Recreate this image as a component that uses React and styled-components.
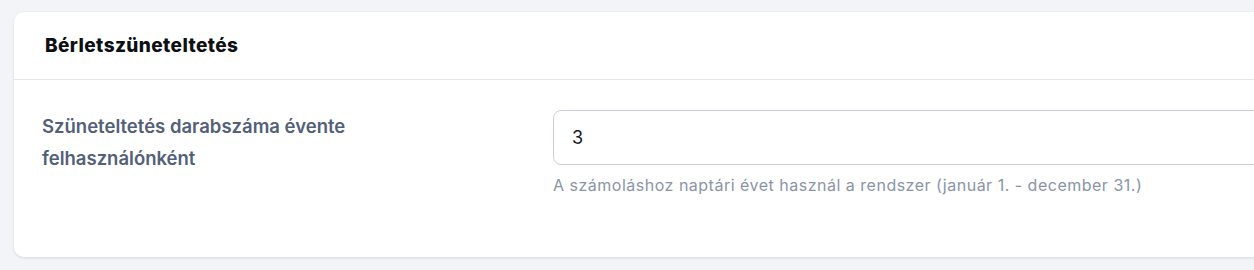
import React from 'react';
import styled, { createGlobalStyle } from 'styled-components';

const GlobalStyle = createGlobalStyle`
  html, body {
    margin: 0;
    padding: 0;
    background: #f3f4f7;
    font-family: Inter, "Noto Sans", sans-serif;
  }
`

const Page = styled.div`
  width: 1254px;
  height: 270px;
  overflow: hidden;
  padding: 12px 0 0 14px;
  box-sizing: border-box;
`

const Card = styled.section`
  width: 1300px;
  background: #ffffff;
  border-radius: 10px;
  box-shadow: 0 1px 3px rgba(20, 30, 50, 0.12);
`

const CardHeader = styled.header`
  height: 67px;
  padding: 0 31px;
  display: flex;
  align-items: center;
  border-bottom: 1px solid #e3e6ec;
`

const Title = styled.h2`
  margin: 0;
  font-size: 19px;
  letter-spacing: 0.4px;
  font-weight: 800;
  color: #0d0f14;
`

const CardBody = styled.div`
  display: grid;
  grid-template-columns: 511px 1fr;
  padding: 30px 0 62px 28px;
`

const Label = styled.label`
  max-width: 360px;
  font-size: 18.5px;
  line-height: 32px;
  font-weight: 600;
  color: #536079;
`

const Field = styled.div`
  display: flex;
  flex-direction: column;
`

const Input = styled.input`
  height: 55px;
  box-sizing: border-box;
  border: 1px solid #c9d0dc;
  border-radius: 8px;
  padding: 0 18px;
  font-family: inherit;
  font-size: 18px;
  color: #16181d;
  outline: none;
`

const Help = styled.p`
  margin: 10px 0 0;
  font-size: 16px;
  letter-spacing: 0.5px;
  color: #8a94a6;
`

export default function App() {
  return (
    <Page>
      <GlobalStyle />
      <Card>
        <CardHeader>
          <Title>Bérletszüneteltetés</Title>
        </CardHeader>
        <CardBody>
          <Label htmlFor="szunet">Szüneteltetés darabszáma évente felhasználónként</Label>
          <Field>
            <Input id="szunet" defaultValue="3" />
            <Help>A számoláshoz naptári évet használ a rendszer (január 1. - december 31.)</Help>
          </Field>
        </CardBody>
      </Card>
    </Page>
  );
}
